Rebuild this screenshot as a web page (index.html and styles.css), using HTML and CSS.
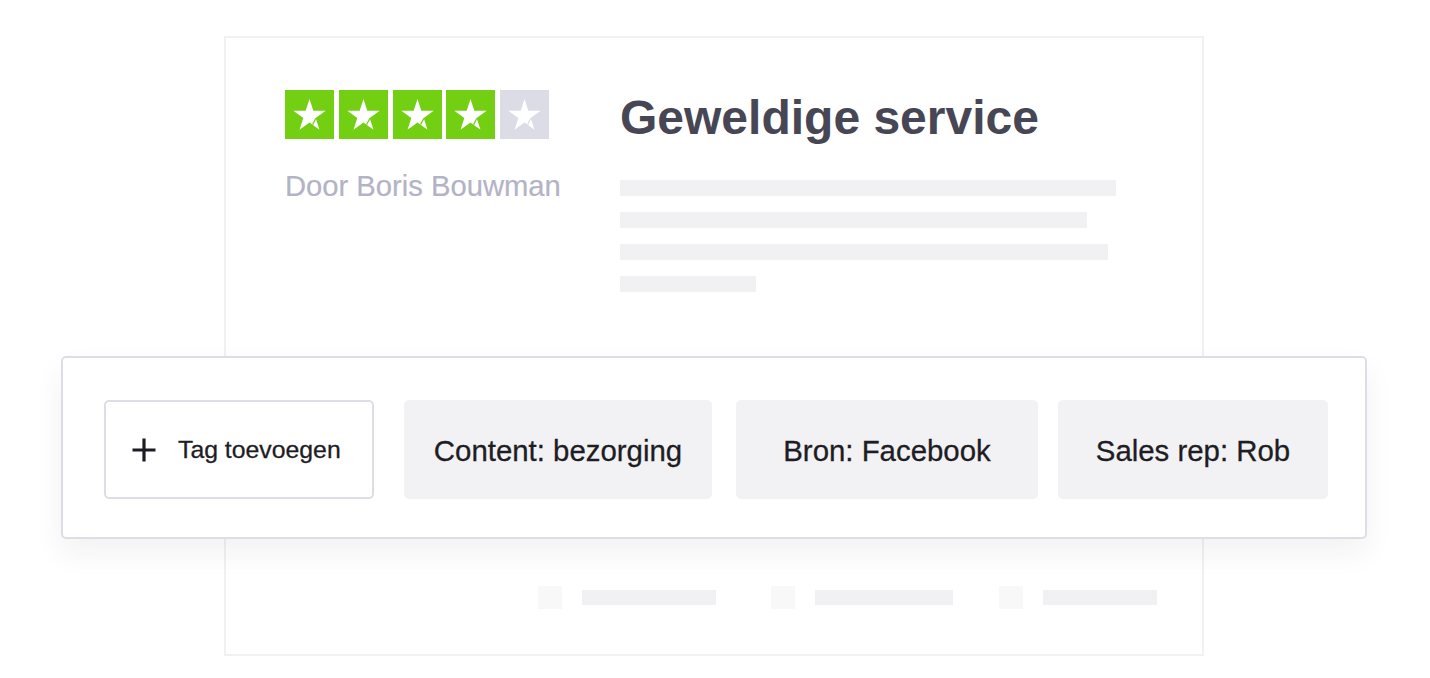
FILE: index.html
```html
<!DOCTYPE html>
<html lang="nl">
<head>
<meta charset="utf-8">
<title>Review tags</title>
<link rel="stylesheet" href="styles.css">
</head>
<body>
<div class="stage">
  <div class="card">
    <div class="card-top">
      <div class="left-col">
        <div class="stars">
          <span class="star star-on"><svg viewBox="0 0 49 49" width="49" height="49"><polygon points="24.5,9 28.32,20.74 40.67,20.75 30.68,28.01 34.49,39.75 24.5,32.5 14.51,39.75 18.32,28.01 8.33,20.75 20.68,20.74" fill="#fff"/><line x1="30.9" y1="28.3" x2="27.6" y2="34.6" stroke="#73cf11" stroke-width="1.2"/></svg></span>
          <span class="star star-on"><svg viewBox="0 0 49 49" width="49" height="49"><polygon points="24.5,9 28.32,20.74 40.67,20.75 30.68,28.01 34.49,39.75 24.5,32.5 14.51,39.75 18.32,28.01 8.33,20.75 20.68,20.74" fill="#fff"/><line x1="30.9" y1="28.3" x2="27.6" y2="34.6" stroke="#73cf11" stroke-width="1.2"/></svg></span>
          <span class="star star-on"><svg viewBox="0 0 49 49" width="49" height="49"><polygon points="24.5,9 28.32,20.74 40.67,20.75 30.68,28.01 34.49,39.75 24.5,32.5 14.51,39.75 18.32,28.01 8.33,20.75 20.68,20.74" fill="#fff"/><line x1="30.9" y1="28.3" x2="27.6" y2="34.6" stroke="#73cf11" stroke-width="1.2"/></svg></span>
          <span class="star star-on"><svg viewBox="0 0 49 49" width="49" height="49"><polygon points="24.5,9 28.32,20.74 40.67,20.75 30.68,28.01 34.49,39.75 24.5,32.5 14.51,39.75 18.32,28.01 8.33,20.75 20.68,20.74" fill="#fff"/><line x1="30.9" y1="28.3" x2="27.6" y2="34.6" stroke="#73cf11" stroke-width="1.2"/></svg></span>
          <span class="star star-off"><svg viewBox="0 0 49 49" width="49" height="49"><polygon points="24.5,9 28.32,20.74 40.67,20.75 30.68,28.01 34.49,39.75 24.5,32.5 14.51,39.75 18.32,28.01 8.33,20.75 20.68,20.74" fill="#fff"/><line x1="30.9" y1="28.3" x2="27.6" y2="34.6" stroke="#dcdce6" stroke-width="1.2"/></svg></span>
        </div>
        <div class="author">Door Boris Bouwman</div>
      </div>
      <div class="right-col">
        <h1 class="title">Geweldige service</h1>
        <div class="lines">
          <div class="line line-1"></div>
          <div class="line line-2"></div>
          <div class="line line-3"></div>
          <div class="line line-4"></div>
        </div>
      </div>
    </div>
    <div class="card-bottom">
      <div class="meta meta-1"><span class="meta-sq"></span><span class="meta-bar bar-1"></span></div>
      <div class="meta meta-2"><span class="meta-sq"></span><span class="meta-bar bar-2"></span></div>
      <div class="meta meta-3"><span class="meta-sq"></span><span class="meta-bar bar-3"></span></div>
    </div>
  </div>

  <div class="panel">
    <div class="tag tag-add">
      <svg class="plus" viewBox="0 0 24 24" width="24" height="24"><path d="M12 0.5V23.5M0.5 12H23.5" stroke="#1d1c24" stroke-width="3.2" fill="none"/></svg>
      <span class="tag-add-label">Tag toevoegen</span>
    </div>
    <div class="tag tag-chip chip-1">Content: bezorging</div>
    <div class="tag tag-chip chip-2">Bron: Facebook</div>
    <div class="tag tag-chip chip-3">Sales rep: Rob</div>
  </div>
</div>
</body>
</html>
```

FILE: styles.css
```css
* {
  box-sizing: border-box;
}

html, body {
  margin: 0;
  padding: 0;
  background: #ffffff;
}

body {
  font-family: "Liberation Sans", Arial, Helvetica, sans-serif;
  -webkit-font-smoothing: antialiased;
}

.stage {
  position: relative;
  width: 1430px;
  height: 678px;
  padding-top: 36px;
  overflow: hidden;
}

.card {
  margin-left: 224px;
  width: 980px;
  height: 620px;
  border: 2px solid #f1f1f1;
  display: flex;
  flex-direction: column;
}

.card-top {
  display: flex;
  padding: 52px 0 0 59px;
}

.left-col {
  width: 335px;
  flex: none;
}

.stars {
  display: flex;
  gap: 4.75px;
}

.star {
  display: block;
  width: 49px;
  height: 49px;
}

.star svg {
  display: block;
}

.star-on {
  background: #73cf11;
}

.star-off {
  background: #dcdce6;
}

.author {
  margin-top: 30px;
  font-size: 29.2px;
  line-height: 34px;
  color: #b3b3c7;
  white-space: nowrap;
  -webkit-text-stroke: 0.2px #b3b3c7;
}

.right-col {
  flex: 1;
}

.title {
  margin: 0;
  font-size: 48px;
  line-height: 56px;
  font-weight: 700;
  color: #474655;
  white-space: nowrap;
}

.lines {
  margin-top: 34px;
  display: flex;
  flex-direction: column;
  gap: 16px;
}

.line {
  height: 16px;
  background: #f1f1f3;
}

.line-1 { width: 496px; }
.line-2 { width: 467px; }
.line-3 { width: 488px; }
.line-4 { width: 136px; }

.card-bottom {
  margin-top: auto;
  padding: 0 0 45px 312px;
  display: flex;
  align-items: center;
}

.meta {
  display: flex;
  align-items: center;
  gap: 20px;
}

.meta-2 { margin-left: 55px; }
.meta-3 { margin-left: 46px; }

.meta-sq {
  display: block;
  width: 24px;
  height: 23px;
  background: #f8f8f8;
}

.meta-bar {
  display: block;
  height: 15px;
  background: #f1f1f3;
}

.bar-1 { width: 134px; }
.bar-2 { width: 138px; }
.bar-3 { width: 114px; }

.panel {
  position: absolute;
  left: 61px;
  top: 356px;
  width: 1306px;
  height: 183px;
  background: #ffffff;
  border: 2px solid #dedde7;
  border-radius: 5px;
  padding: 42px 0 0 41px;
  display: flex;
  box-shadow: 0 14px 30px rgba(30, 30, 60, 0.06);
}

.tag {
  height: 99px;
  border-radius: 5px;
  display: flex;
  align-items: center;
  justify-content: center;
  color: #1e1d24;
  white-space: nowrap;
  -webkit-text-stroke: 0.3px #1e1d24;
}

.tag-add {
  width: 270px;
  border: 2px solid #dedde7;
  justify-content: flex-start;
  padding-left: 26px;
}

.plus {
  display: block;
  flex: none;
}

.tag-add-label {
  margin-left: 22px;
  font-size: 24.8px;
}

.tag-chip {
  background: #f2f2f4;
  font-size: 29.4px;
  padding-top: 2px;
}

.chip-1 { width: 308px; margin-left: 30px; }
.chip-2 { width: 302px; margin-left: 24px; }
.chip-3 { width: 270px; margin-left: 20px; }
```
